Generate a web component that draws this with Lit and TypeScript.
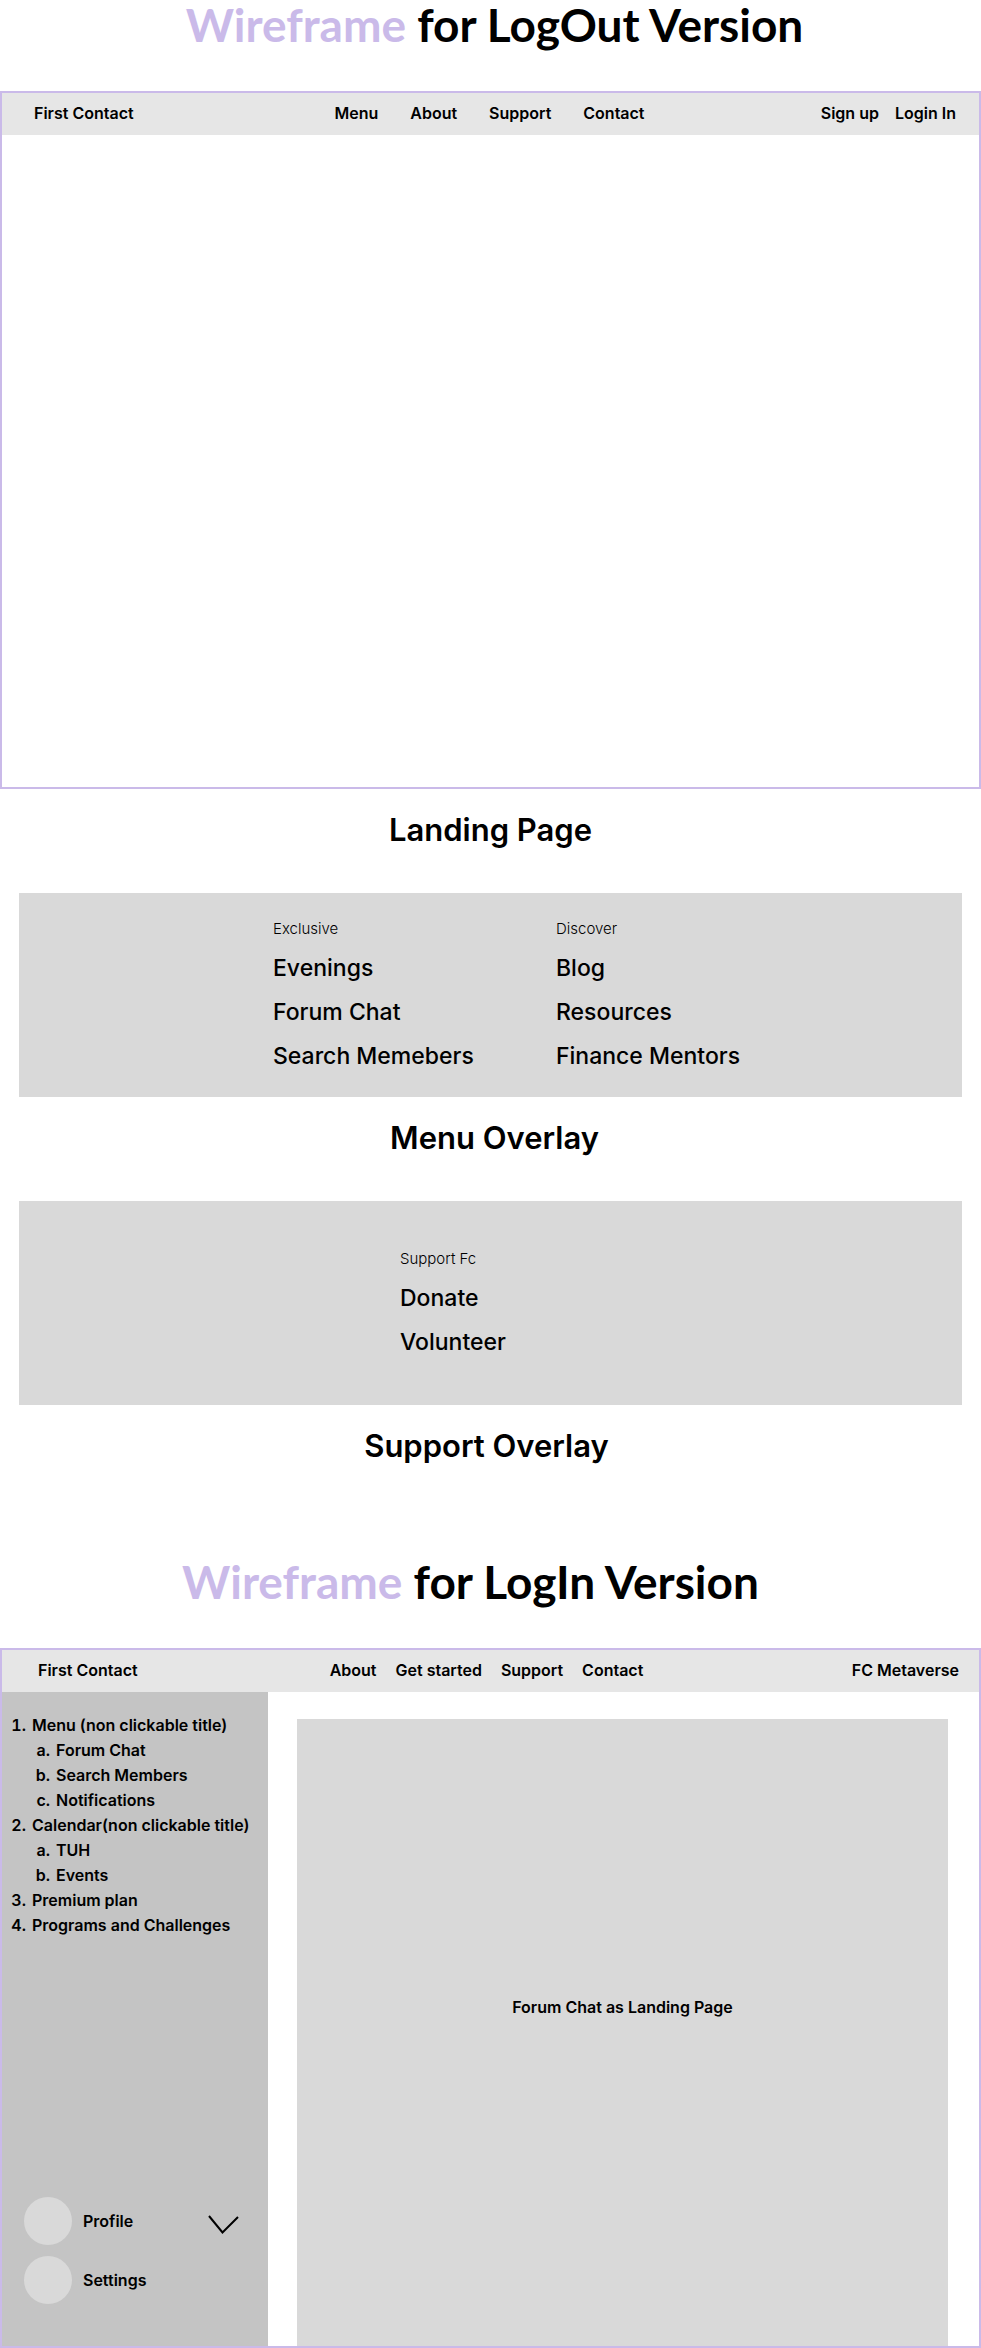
import { LitElement, html, css } from "lit";
import { customElement } from "lit/decorators.js";

interface MenuGroup {
  label: string;
  items: string[];
}

interface OutlineEntry {
  title: string;
  children: string[];
}

const MENU_GROUPS: MenuGroup[] = [
  { label: "Exclusive", items: ["Evenings", "Forum Chat", "Search Memebers"] },
  { label: "Discover", items: ["Blog", "Resources", "Finance Mentors"] },
];

const SUPPORT_GROUPS: MenuGroup[] = [
  { label: "Support Fc", items: ["Donate", "Volunteer"] },
];

const OUTLINE: OutlineEntry[] = [
  {
    title: "Menu (non clickable title)",
    children: ["Forum Chat", "Search Members", "Notifications"],
  },
  { title: "Calendar(non clickable title)", children: ["TUH", "Events"] },
  { title: "Premium plan", children: [] },
  { title: "Programs and Challenges", children: [] },
];

@customElement("app-root")
export class AppRoot extends LitElement {
  static styles = css`
    :host {
      display: block;
      background: #fff;
      color: #000;
      font-family: Inter, "Liberation Sans", sans-serif;
      font-size: 16px;
      font-weight: 600;
      line-height: 24px;
    }
    * {
      box-sizing: border-box;
    }
    a {
      color: inherit;
      text-decoration: none;
    }
    h1,
    h2,
    h3,
    p,
    ul,
    ol {
      margin: 0;
      padding: 0;
      font: inherit;
    }
    ul,
    ol {
      list-style: none;
    }
    .title {
      font-family: Lato, "Open Sans", sans-serif;
      font-size: 46px;
      font-weight: 700;
      line-height: 50px;
      text-align: center;
    }
    .title.first {
      padding: 0 0 41px 8px;
    }
    .title.second {
      padding: 74px 40px 41px 0;
    }
    .accent {
      color: #cabae9;
    }
    .caption {
      padding: 21px 0 43px;
      font-size: 31px;
      font-weight: 600;
      line-height: 40px;
      text-align: center;
    }
    .caption.menu {
      padding-left: 8px;
    }
    .caption.support {
      padding-right: 8px;
      padding-bottom: 17px;
    }
    .frame {
      display: flex;
      flex-direction: column;
      min-height: 698px;
      border: 2px solid #cabae9;
    }
    .frame.tall {
      min-height: 700px;
    }
    .bar {
      display: grid;
      grid-template-columns: 1fr auto 1fr;
      align-items: center;
      min-height: 42px;
      padding: 0 2px 2px 0;
      background: #e6e6e6;
    }
    .brand {
      padding-left: 32px;
    }
    .links {
      display: flex;
      gap: 32px;
    }
    .actions {
      display: flex;
      justify-content: flex-end;
      gap: 16px;
      padding-right: 21px;
    }
    .bar.member {
      padding-right: 8px;
    }
    .member .brand {
      padding-left: 36px;
    }
    .member .links {
      gap: 19px;
    }
    .member .actions {
      padding-right: 12px;
    }
    .overlay {
      display: grid;
      align-items: center;
      min-height: 204px;
      margin: 0 19px;
      padding-top: 4px;
      background: #d9d9d9;
    }
    .overlay.pair {
      grid-template-columns: 254fr 283fr 406fr;
    }
    .overlay.single {
      grid-template-columns: 381fr 562fr;
    }
    .group:first-child {
      grid-column-start: 2;
    }
    .label {
      margin-bottom: 5px;
      font-size: 15px;
      font-weight: 300;
    }
    .group ul {
      font-size: 23px;
      font-weight: 500;
      line-height: 44px;
    }
    .body {
      flex: 1;
      display: flex;
    }
    .side {
      display: flex;
      flex-direction: column;
      justify-content: space-between;
      flex: 0 0 266px;
      padding: 21px 0 42px;
      background: #c4c4c4;
    }
    .outline {
      line-height: 25px;
      counter-reset: entry;
    }
    .outline > li {
      counter-increment: entry;
    }
    .row {
      display: flex;
      gap: 6px;
    }
    .row::before {
      content: counter(entry) ".";
      flex: 0 0 24px;
      font-variant-numeric: tabular-nums;
      text-align: right;
    }
    .outline ol {
      counter-reset: sub;
    }
    .outline ol li {
      counter-increment: sub;
    }
    .outline ol .row::before {
      content: counter(sub, lower-alpha) ".";
      flex-basis: 48px;
    }
    .account {
      display: flex;
      flex-direction: column;
      gap: 11px;
      padding: 0 28px 0 22px;
    }
    .entry {
      display: flex;
      align-items: center;
      justify-content: space-between;
      padding: 0;
      border: 0;
      background: none;
      color: inherit;
      font: inherit;
      text-align: left;
    }
    .who {
      display: flex;
      align-items: center;
      gap: 11px;
    }
    .avatar {
      width: 48px;
      height: 48px;
      border-radius: 50%;
      background: #d9d9d9;
    }
    .chevron {
      width: 32px;
      height: 20px;
      margin-top: 6px;
      fill: none;
      stroke: #000;
      stroke-width: 2;
    }
    .main {
      flex: 1;
      display: flex;
      padding: 27px 31px 0 29px;
    }
    .panel {
      flex: 1;
      padding-top: 276px;
      background: #d9d9d9;
      text-align: center;
    }
  `;

  private link(text: string) {
    return html`<a href="#">${text}</a>`;
  }

  private group(g: MenuGroup) {
    return html`
      <section class="group">
        <h3 class="label">${g.label}</h3>
        <ul>
          ${g.items.map((i) => html`<li>${this.link(i)}</li>`)}
        </ul>
      </section>
    `;
  }

  render() {
    return html`
      <h1 class="title first"><span class="accent">Wireframe</span> for LogOut Version</h1>
      <section class="frame">
        <header class="bar">
          <a class="brand" href="#">First Contact</a>
          <nav class="links">${["Menu", "About", "Support", "Contact"].map(this.link)}</nav>
          <div class="actions">${["Sign up", "Login In"].map(this.link)}</div>
        </header>
      </section>
      <h2 class="caption">Landing Page</h2>
      <div class="overlay pair">${MENU_GROUPS.map((g) => this.group(g))}</div>
      <h2 class="caption menu">Menu Overlay</h2>
      <div class="overlay single">${SUPPORT_GROUPS.map((g) => this.group(g))}</div>
      <h2 class="caption support">Support Overlay</h2>

      <h1 class="title second"><span class="accent">Wireframe</span> for LogIn Version</h1>
      <section class="frame tall">
        <header class="bar member">
          <a class="brand" href="#">First Contact</a>
          <nav class="links">
            ${["About", "Get started", "Support", "Contact"].map(this.link)}
          </nav>
          <div class="actions">${this.link("FC Metaverse")}</div>
        </header>
        <div class="body">
          <aside class="side">
            <ol class="outline">
              ${OUTLINE.map(
                (e) => html`
                  <li>
                    <div class="row">${e.title}</div>
                    ${e.children.length
                      ? html`<ol>
                          ${e.children.map(
                            (c) => html`<li><div class="row">${this.link(c)}</div></li>`
                          )}
                        </ol>`
                      : null}
                  </li>
                `
              )}
            </ol>
            <div class="account">
              <button class="entry" type="button">
                <span class="who"><span class="avatar"></span>Profile</span>
                <svg class="chevron" viewBox="0 0 32 20" aria-hidden="true">
                  <path d="M1 2L14.500 18.500L30 3" />
                </svg>
              </button>
              <button class="entry" type="button">
                <span class="who"><span class="avatar"></span>Settings</span>
              </button>
            </div>
          </aside>
          <main class="main">
            <p class="panel">Forum Chat as Landing Page</p>
          </main>
        </div>
      </section>
    `;
  }
}
